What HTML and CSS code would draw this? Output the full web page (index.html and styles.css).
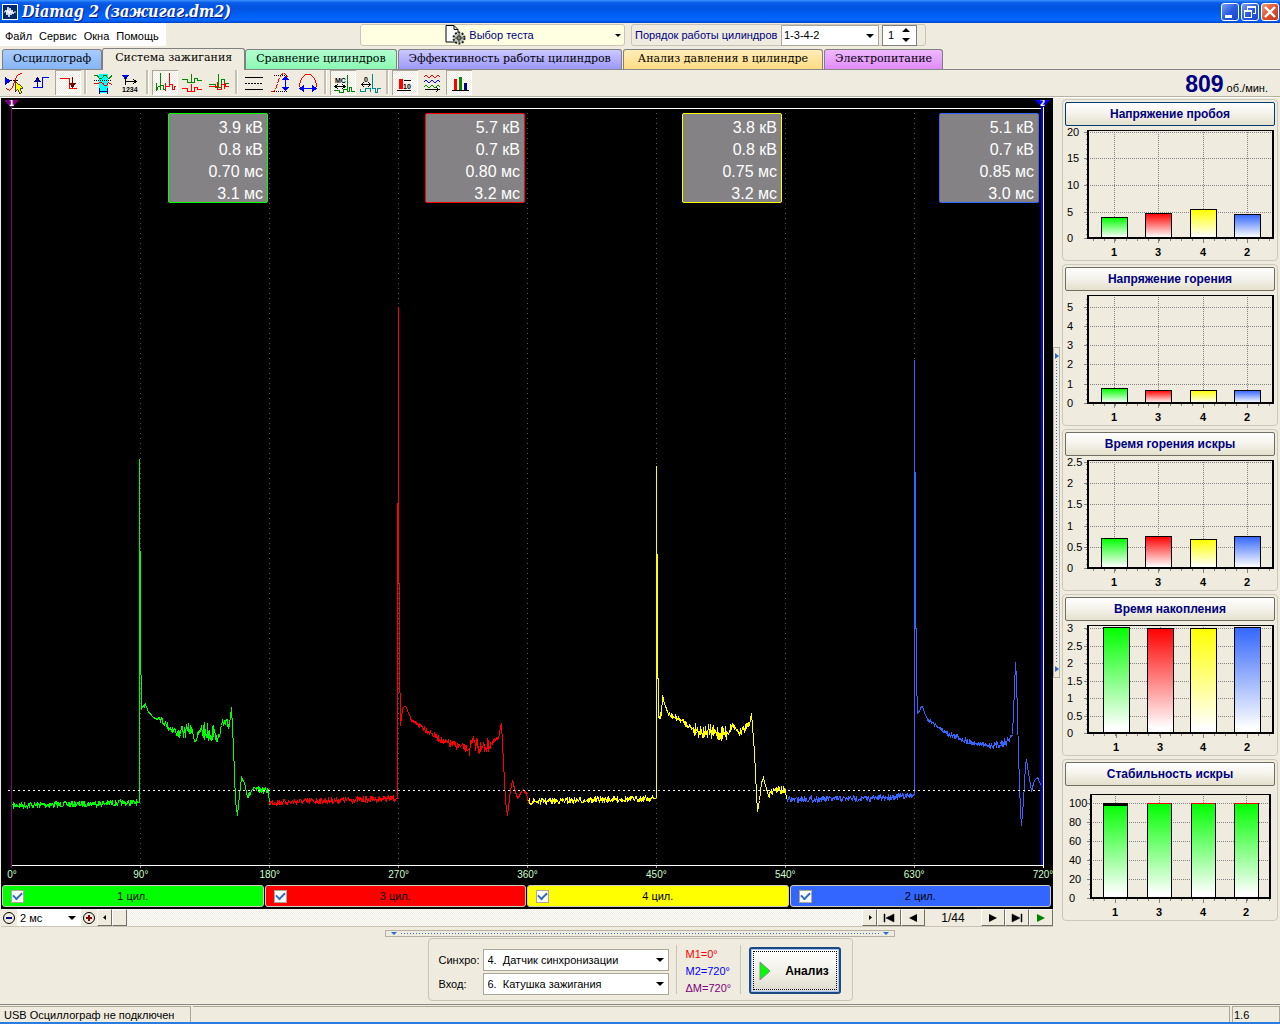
FILE: index.html
```html
<!DOCTYPE html>
<html lang="ru">
<head>
<meta charset="utf-8">
<title>Diamag 2 (зажигаг.dm2)</title>
<link rel="stylesheet" href="styles.css">
</head>
<body>
<header class="titlebar">
  <svg class="app-icon" width="16" height="16" viewBox="0 0 16 16"><rect width="16" height="16" fill="#fff"/><rect x="1" y="1" width="14" height="14" fill="#002a6c"/><path d="M2 8h1l1-2 1 5 1-8 1 10 1-9 1 7 1-5 1 4 1-2h2" fill="none" stroke="#fff"/></svg>
  <h1 class="title">Diamag 2 (зажигаг.dm2)</h1>
  <div class="win-buttons">
    <button class="win-btn" aria-label="Свернуть"><svg width="16" height="16" viewBox="0 0 16 16"><path d="M3 11h7v3H3z" fill="#fff"/></svg></button>
    <button class="win-btn" aria-label="Восстановить"><svg width="16" height="16" viewBox="0 0 16 16" fill="none" stroke="#fff" shape-rendering="crispEdges"><path d="M5.500 6V2.500h8v7H11M5 3.500h9M2.500 6.500h7v7h-7zM2 7.500h8"/></svg></button>
    <button class="win-btn close" aria-label="Закрыть"><svg width="16" height="16" viewBox="0 0 16 16"><path d="M3 3l10 10M13 3L3 13" stroke="#fff" stroke-width="2.400"/></svg></button>
  </div>
</header>

<div class="menurow">
  <nav class="menu">
    <a href="#file">Файл</a><a href="#service">Сервис</a><a href="#windows">Окна</a><a href="#help">Помощь</a>
  </nav>
  <button class="test-picker">
    <span class="test-name">
      <svg width="21" height="20" viewBox="0 0 21 20"><path d="M1 .5h8l4 4V17H1z" fill="#fff" stroke="#000"/><path d="M9 .5v4h4" fill="none" stroke="#000"/><circle cx="14" cy="13" r="5.500" fill="#c8d0c4" stroke="#222" stroke-width="2" stroke-dasharray="2 1.500"/><circle cx="14" cy="13" r="4" fill="#b4bcb0"/><circle cx="14" cy="13" r="2" fill="#ffffe1" stroke="#222"/><path d="M14 9v8M10 13h8" stroke="#222" stroke-width=".7"/></svg>
      Выбор теста
    </span>
    <span class="caret small"></span>
  </button>
  <div class="order">
    <label for="order">Порядок работы цилиндров</label>
    <span class="drop order-drop"><select id="order"><option>1-3-4-2</option></select></span>
    <span class="spin"><input type="number" value="1" aria-label="Номер цилиндра"><svg width="8" height="14" viewBox="0 0 8 14"><path d="M0 4l4-4 4 4zM0 10h8l-4 4z"/></svg></span>
  </div>
</div>

<nav class="tabs">
  <a href="#scope" class="tab blue">Осциллограф</a>
  <a href="#ignition" class="tab active">Система зажигания</a>
  <a href="#compare" class="tab green">Сравнение цилиндров</a>
  <a href="#efficiency" class="tab violet">Эффективность работы цилиндров</a>
  <a href="#pressure" class="tab amber">Анализ давления в цилиндре</a>
  <a href="#power" class="tab pink">Электропитание</a>
</nav>

<div class="toolbar">
  <button class="tool" aria-label="Маркер"><svg viewBox="0 0 26 26"><path d="M4 7l6 4-6 4z" fill="#00f"/><path d="M9 10.500h9" stroke="#000" stroke-dasharray="2 1"/><path d="M5 18q4 5 7-2l3-8q2-5 6-4" fill="none" stroke="#f00"/><path d="M14 11l8 7-3 .5 2 4-2 1-2-4-3 2z" fill="#ff0" stroke="#000" stroke-width=".7"/></svg></button>
  <button class="tool" aria-label="Фронт"><svg viewBox="0 0 26 26" fill="none"><path d="M5 17.500h9.500v-10H21" stroke="#00f"/><path d="M9.500 17V9" stroke="#008" stroke-width="1"/><path d="M6 12l3.500-5 3.500 5z" fill="#008"/></svg></button>
  <button class="tool on" aria-label="Спад"><svg viewBox="0 0 26 26" fill="none"><path d="M5 8.500h9.500v10H22" stroke="#f00"/><path d="M17.500 7v9" stroke="#700"/><path d="M14 13h7l-3.500 5z" fill="#700"/></svg></button>
  <span class="sep"></span>
  <button class="tool" aria-label="Диапазон"><svg viewBox="0 0 26 26" fill="none"><path d="M9 4h9v19H9z" fill="#0ff"/><path d="M4 5q4 0 5 3 2 2 4-1 2-4 5 1 2 1 4-3" stroke="#080"/><path d="M4 10.500h18" stroke="#000" stroke-dasharray="1 1"/><path d="M4 13q2 2 5 0 4-1 5 2 3 2 4-2 1-1 4 2" stroke="#f00"/><path d="M9.500 18v6M17.500 18v6M10 21h7" stroke="#008" stroke-width="1"/></svg></button>
  <button class="tool" aria-label="Шкала"><svg viewBox="0 0 26 26" fill="none"><path d="M5 5h7l-3.500 5z" fill="#00f"/><path d="M8.500 7v8M9 11.500h10M16 9l3 2.500-3 2.500" stroke="#000"/><text x="5" y="22" class="icon-text">1234</text></svg></button>
  <span class="sep"></span>
  <button class="tool on" aria-label="Парад"><svg viewBox="0 0 26 26" fill="none"><path d="M4.500 13v8l2-5h2M8.500 3v17M8.500 15.500h3v4h2v-3" stroke="#080"/><path d="M13.500 13v8M13.500 16.500h4M17.500 3v14M17.500 14.500h3v5h2v-3h1" stroke="#f00"/></svg></button>
  <button class="tool" aria-label="Растр"><svg viewBox="0 0 26 26" fill="none"><path d="M3 9.500h5v3h4V4v8h3v-4h3v2h5" stroke="#080"/><path d="M3 18.500h5v3h4v-8 8h3v-4h3v2h5" stroke="#f00"/></svg></button>
  <button class="tool" aria-label="Наложение"><svg viewBox="0 0 26 26" fill="none"><path d="M3 14.500h6v3h3V4v13h3v-8h3v4h5" stroke="#080"/><path d="M3 16.500h8v-5 8h4v-5h4v2h4M18.500 12v7" stroke="#f00"/></svg></button>
  <span class="sep"></span>
  <button class="tool" aria-label="Линии"><svg viewBox="0 0 26 26"><path d="M4 7.500h18M4 19.500h18" stroke="#000"/><path d="M4 13.500h18" stroke="#000" stroke-dasharray="2 1"/></svg></button>
  <button class="tool" aria-label="Амплитуда"><svg viewBox="0 0 26 26" fill="none"><path d="M3 21q4 2 6-6l2-6q3-8 7-4l2 3" stroke="#f00" stroke-dasharray="5 1"/><path d="M6 5.500h14M6 21.500h14" stroke="#000" stroke-dasharray="1 1"/><path d="M17.500 9v10" stroke="#00f"/><path d="M14 10l3.500-4 3.500 4zM14 17h7l-3.500 4z" fill="#00f"/></svg></button>
  <button class="tool" aria-label="Период"><svg viewBox="0 0 26 26" fill="none"><path d="M4.500 17q0-4 2-8 3-5 6.500-5t6.500 5q2 4 2 8" stroke="#f00"/><path d="M4 18.500h18" stroke="#00f"/><path d="M9 15v7l-5-3.500zM17 15v7l5-3.500z" fill="#00f"/></svg></button>
  <span class="sep"></span>
  <button class="tool on" aria-label="Показывать мс"><svg viewBox="0 0 26 26" fill="none"><text x="5" y="13" class="icon-text">МС</text><path d="M6 16.500h8M8 14l-3 2.500L8 19M12 14l3 2.500-3 2.500" stroke="#000"/><path d="M4 20.500h5v2h4v-3h4v-14M17.500 5v16h2v-4h2v4h3" stroke="#080"/></svg></button>
  <button class="tool" aria-label="Показывать градусы"><svg viewBox="0 0 26 26" fill="none"><text x="7" y="12" class="icon-text">0</text><path d="M5 14.500h8M7 12l-2 2.500L7 17M11 12l2 2.500-2 2.500" stroke="#000"/><path d="M3 18.500v3h5v-3h5v3M15.500 4v14h3v4h2v-4h3" stroke="#088"/></svg></button>
  <span class="sep"></span>
  <button class="tool on" aria-label="Числа"><svg viewBox="0 0 26 26"><path d="M7 9h4v10H7z" fill="#f00"/><path d="M5 20.500h14M12 10.500h7" stroke="#000"/><text x="11" y="19" class="icon-text">10</text></svg></button>
  <button class="tool" aria-label="Осреднение"><svg viewBox="0 0 26 26" fill="none"><path d="M5 7l2-2 3 3 3-3 3 3 3-3 2 2" stroke="#f00"/><path d="M5 12l2-2 3 3 3-3 3 3 3-3 2 2" stroke="#00f"/><path d="M5 17l2-2 3 3 3-3 3 3 3-3 2 2" stroke="#080"/><path d="M6 19.500h13M17 17.500l3 2-3 2" stroke="#000"/></svg></button>
  <button class="tool on" aria-label="Гистограммы"><svg viewBox="0 0 26 26"><path d="M8 9h3v11H8z" fill="#f00"/><path d="M13 7h3v13h-3z" fill="#080"/><path d="M18 13h3v7h-3z" fill="#008"/><path d="M6 20.500h17" stroke="#000"/></svg></button>
  <p class="rpm"><strong>809</strong> об./мин.</p>
</div>

<main class="work">
  <section class="scope-col">
    <div class="scope">
      <div class="plot">
        <svg id="plot" viewBox="0 0 1052 770" preserveAspectRatio="none" shape-rendering="crispEdges" fill="none"></svg>
        <span class="flag m1">1</span>
        <span class="flag m2">2</span>
        <div class="readouts">
          <div class="slot"><div class="readout c1">3.9 кВ<br>0.8 кВ<br>0.70 мс<br>3.1 мс</div></div>
          <div class="slot"><div class="readout c3">5.7 кВ<br>0.7 кВ<br>0.80 мс<br>3.2 мс</div></div>
          <div class="slot"><div class="readout c4">3.8 кВ<br>0.8 кВ<br>0.75 мс<br>3.2 мс</div></div>
          <div class="slot"><div class="readout c2">5.1 кВ<br>0.7 кВ<br>0.85 мс<br>3.0 мс</div></div>
        </div>
      </div>
      <div class="degrees"><span>0°</span><span>90°</span><span>180°</span><span>270°</span><span>360°</span><span>450°</span><span>540°</span><span>630°</span><span>720°</span></div>
      <div class="cylinders">
        <label class="cyl c1"><input type="checkbox" checked><span>1 цил.</span></label>
        <label class="cyl c3"><input type="checkbox" checked><span>3 цил.</span></label>
        <label class="cyl c4"><input type="checkbox" checked><span>4 цил.</span></label>
        <label class="cyl c2"><input type="checkbox" checked><span>2 цил.</span></label>
      </div>
    </div>
    <div class="scroller">
      <button class="flat" aria-label="Уменьшить"><svg width="14" height="14" viewBox="0 0 14 14" fill="none"><circle cx="7" cy="7" r="5.500" stroke="#000"/><path d="M4 7h6" stroke="#008" stroke-width="2"/></svg></button>
      <span class="drop scale-drop"><select aria-label="Развёртка"><option>2 мс</option></select></span>
      <button class="flat" aria-label="Увеличить"><svg width="14" height="14" viewBox="0 0 14 14" fill="none"><circle cx="7" cy="7" r="5.500" stroke="#000"/><path d="M4 7h6M7 4v6" stroke="#800" stroke-width="2"/></svg></button>
      <button class="raised arrow" aria-label="Влево"><svg width="6" height="8" viewBox="0 0 6 8"><path d="M4 1v5L1 3.500z"/></svg></button>
      <div class="track"><span class="raised thumb"></span></div>
      <button class="raised arrow" aria-label="Вправо"><svg width="6" height="8" viewBox="0 0 6 8"><path d="M2 1v5l3-2.500z"/></svg></button>
      <button class="raised nav" aria-label="Первый"><svg width="12" height="10" viewBox="0 0 12 10"><path d="M1 1h1v8H1zM11 1v8L3 5z" stroke="#000" stroke-width=".5"/></svg></button>
      <button class="raised nav" aria-label="Предыдущий"><svg width="10" height="10" viewBox="0 0 10 10"><path d="M9 1v8L1 5z"/></svg></button>
      <output class="frame-no">1/44</output>
      <button class="raised nav" aria-label="Следующий"><svg width="10" height="10" viewBox="0 0 10 10"><path d="M1 1v8l8-4z"/></svg></button>
      <button class="raised nav" aria-label="Последний"><svg width="12" height="10" viewBox="0 0 12 10"><path d="M10 1h1v8h-1zM1 1v8l8-4z" stroke="#000" stroke-width=".5"/></svg></button>
      <button class="raised nav" aria-label="Пуск"><svg width="10" height="10" viewBox="0 0 10 10"><path d="M1 1v8l8-4z" fill="#008000"/></svg></button>
    </div>
  </section>
  <div class="vsplit"><div class="vgrip"><i></i><b></b><i></i></div></div>
  <aside class="charts" id="charts"></aside>
</main>

<div class="hgrip"><i></i><b></b><i></i></div>

<form class="controls">
  <div class="sources">
    <label for="sync">Синхро:</label>
    <span class="drop"><select id="sync"><option>4.&nbsp; Датчик синхронизации</option></select></span>
    <label for="input">Вход:</label>
    <span class="drop"><select id="input"><option>6.&nbsp; Катушка зажигания</option></select></span>
  </div>
  <div class="markers"><span class="mk1">M1=0°</span><span class="mk2">M2=720°</span><span class="mkd">ΔM=720°</span></div>
  <button type="button" class="analyse"><svg width="12" height="20" viewBox="0 0 12 20"><path d="M1 1v18l10-9z" fill="#0f0" stroke="#888"/></svg>Анализ</button>
</form>

<footer class="status"><span class="s-usb">USB Осциллограф не подключен</span><span class="s-mid"></span><span class="s-ver">1.6</span></footer>
<script src="app.js"></script>
</body>
</html>
```
FILE: styles.css
```css
* { box-sizing: border-box; }
body {
  margin: 0;
  min-height: 100vh;
  display: flex;
  flex-direction: column;
  background: #efebde;
  color: #000;
  font: 11px/14px "Liberation Sans", sans-serif;
  border-bottom: 2px solid #2a7de0;
}
button, select, input { font: inherit; color: inherit; margin: 0; padding: 0; border-radius: 0; }
a { color: inherit; text-decoration: none; }
h1, p { margin: 0; }
svg { flex: none; }

.titlebar {
  height: 23px;
  display: flex;
  align-items: center;
  gap: 4px;
  padding: 0 1px 0 2px;
  background: linear-gradient(#3a93ff, #0a5be8 12%, #0053e0 35%, #0062fa 70%, #0066ff 88%, #0041c0);
}
.title { flex: 1; color: #fff; font: italic bold 16px/20px "DejaVu Serif Condensed", "DejaVu Serif", serif; text-shadow: 1px 1px #0a1883; }
.win-buttons { display: flex; gap: 2px; }
.win-btn {
  width: 18px; height: 18px;
  display: flex; align-items: center; justify-content: center;
  border: 1px solid #fff; border-radius: 3px;
  background: linear-gradient(135deg, #7ba0f0, #2a5be0 50%, #1c49cc);
}
.win-btn.close { background: linear-gradient(135deg, #f0a080, #e05030 50%, #c03818); }

.menurow { height: 25px; display: flex; align-items: flex-start; }
.menu { width: 166px; height: 23px; padding: 2px 5px 0; display: flex; align-items: center; gap: 7px; background: #fff; }
.test-picker {
  width: 265px; height: 22px; margin: 1px 6px 0 194px; padding: 0 3px;
  display: flex; align-items: center;
  background: #ffffe1; border: 1px solid #c8c4b8; border-radius: 3px;
  color: #000080; font-size: 11px;
}
.test-name { flex: 1; display: flex; align-items: center; justify-content: center; gap: 3px; }
.caret { border: 4px solid transparent; border-top-color: #000; border-bottom: 0; }
.caret.small { border-width: 3px 3px 0; }
.order {
  height: 22px; margin-top: 1px; padding: 0 8px 0 3px; display: flex; align-items: center; gap: 3px;
  border: 1px solid #c8c4b8; border-radius: 3px; color: #000080;
}
.order label { width: 143px; white-space: nowrap; }
.drop { position: relative; display: flex; color: #000; }
.drop select {
  width: 100%; height: 22px; padding: 0 4px; appearance: none;
  background: #fff; border: 1px solid #aca899;
}
.drop::after {
  content: ""; position: absolute; right: 5px; top: 9px; pointer-events: none;
  border: 4px solid transparent; border-top-color: #000; border-bottom: 0;
}
.order-drop { width: 98px; }
.order-drop select { padding: 0 2px; }
.order-drop select, .spin { height: 21px; font-size: 11px; }
.spin { width: 35px; display: flex; align-items: center; padding-right: 6px; background: #fff; border: 1px solid #808080; color: #000; }
.spin input { flex: 1; min-width: 0; padding-left: 5px; border: 0; background: none; appearance: textfield; }
.spin input::-webkit-inner-spin-button { display: none; }

.tabs { display: flex; align-items: flex-end; height: 22px; padding-left: 2px; border-bottom: 1px solid #888; }
.tab {
  height: 20px; margin-right: 1px; padding: 0 10px; white-space: nowrap;
  font: 11px/18px "DejaVu Serif", serif;
  border: 1px solid #808080; border-bottom: 0; border-radius: 3px 3px 0 0;
}
.tab.active { height: 22px; margin: 0 0 -1px -1px; padding: 0 12px; background: #efebde; }
.tab.blue { background: linear-gradient(#a8ccff, #86b4f4); }
.tab.green { background: linear-gradient(#b0ffd0, #8cf8b4); }
.tab.violet { background: linear-gradient(#ccc8ff, #9c98fc); }
.tab.amber { padding: 0 14px; background: linear-gradient(#ffecb8, #ffdc84); }
.tab.pink { background: linear-gradient(#f0b8ff, #e08cfc); }

.toolbar { height: 28px; display: flex; gap: 1px; padding: 0 12px 2px 1px; border-bottom: 1px solid #fff; box-shadow: inset 0 -1px #b4b0a4; }
.tool { width: 26px; height: 25px; border: 0; background: none; }
.tool svg { display: block; width: 26px; height: 26px; shape-rendering: crispEdges; }
.tool.on {
  background: repeating-conic-gradient(#fff 0 25%, #efebde 0 50%) 0 0 / 2px 2px;
  box-shadow: inset 1px 1px #aca899, inset -1px -1px #fff;
}
.sep { width: 7px; height: 24px; padding-left: 2px; }
.sep::before { content: ""; display: block; width: 2px; height: 100%; background: #c4c0b4; border-right: 1px solid #fff; }
.icon-text { font: bold 7px "Liberation Sans", sans-serif; fill: #000; }
.rpm { margin-left: auto; font-size: 11px; line-height: 28px; }
.rpm strong { font-size: 23px; color: #000080; }

.work { flex: 1; display: flex; padding: 0 2px 0 1px; }
.scope-col { flex: 1; min-width: 0; display: flex; flex-direction: column; }
.scope { flex: 1; display: flex; flex-direction: column; background: #000; }
.plot { flex: 1; position: relative; min-height: 240px; }
.plot svg { position: absolute; inset: 0; width: 100%; height: 100%; }
.plot svg * { vector-effect: non-scaling-stroke; }
.flag {
  position: absolute; top: 2px; width: 15px; height: 8px;
  color: #fff; font: bold 8px/7px "DejaVu Sans", sans-serif; text-align: center;
  clip-path: polygon(0 0, 100% 0, 50% 100%);
}
.m1 { left: 3px; background: #800080; }
.m2 { right: 3px; background: #00f; }
.readouts { position: relative; display: flex; padding: 15px 14px 0 10px; }
.slot { flex: 1; display: flex; justify-content: flex-end; }
.readout {
  width: 100px; padding: 3px 4px 0; height: 90px;
  background: #848284; border: 1px solid #fff; border-radius: 2px;
  color: #fff; font-size: 16px; line-height: 22px; text-align: right;
}
.readout.c1 { border-color: #0f0; }
.readout.c3 { border-color: #f00; }
.readout.c4 { border-color: #ff0; }
.readout.c2 { border-color: #36f; }
.degrees { height: 17px; padding: 0 10px 0 11px; display: flex; justify-content: space-between; color: #ceffce; font: 10px/14px "Liberation Sans", sans-serif; }
.degrees span { width: 0; display: flex; justify-content: center; }
.cylinders { display: grid; grid-template-columns: repeat(4, 1fr); gap: 1px; padding: 0 2px 2px 1px; }
.cyl {
  height: 22px; padding: 0 8px; display: flex; align-items: center;
  border: 1px solid #d0ccc0; border-radius: 3px; color: #000;
}
.cyl span { flex: 1; text-align: center; padding-right: 13px; }
.cyl.c1 { background: #0f0; }
.cyl.c3 { background: #f00; }
.cyl.c4 { background: #ff0; }
.cyl.c2 { background: #36f; }
.cyl input {
  appearance: none; width: 13px; height: 13px; background: #fff; border: 1px solid #aca899;
  display: flex; align-items: center; justify-content: center;
}
.cyl input:checked::before { content: ""; width: 7px; height: 4px; margin-top: -2px; border: solid #316ac5; border-width: 0 0 2px 2px; transform: rotate(-45deg); }

.scroller { height: 18px; display: flex; border-bottom: 1px solid #c8c4b8; }
.flat { width: 16px; display: flex; align-items: center; justify-content: center; border: 0; background: none; }
.scale-drop { width: 64px; }
.scale-drop select { height: 17px; padding: 0 3px; border: 0; }
.scale-drop::after { top: 7px; }
.raised { background: #efebde; border: 1px solid #fff; border-right-color: #716f64; border-bottom-color: #716f64; }
.arrow { width: 15px; display: flex; align-items: center; justify-content: center; }
.track { flex: 1; display: flex; background: repeating-conic-gradient(#fff 0 25%, #efebde 0 50%) 0 0 / 2px 2px; }
.thumb { width: 15px; }
.nav { width: 24px; display: flex; align-items: center; justify-content: center; }
.frame-no { width: 56px; text-align: center; font-size: 12px; line-height: 18px; }

.vsplit { width: 9px; display: flex; align-items: center; }
.vgrip, .hgrip { display: flex; align-items: center; justify-content: space-between; border: 1px solid #b4b0a4; }
.vgrip { flex-direction: column; width: 7px; height: 331px; padding: 5px 0; }
.vgrip b { flex: 1; width: 1px; margin: 2px 0; background: repeating-linear-gradient(#316ac5 0 1px, transparent 1px 3px); }
.vgrip i { border: 3px solid transparent; border-left: 4px solid #316ac5; border-right: 0; }
.hgrip { width: 510px; max-width: 100%; height: 7px; margin: 3px auto 1px; padding: 0 5px; }
.hgrip b { flex: 1; height: 1px; margin: 0 4px; background: repeating-linear-gradient(90deg, #316ac5 0 1px, transparent 1px 3px); }
.hgrip i { border: 3px solid transparent; border-top-color: #316ac5; border-bottom: 0; }

.charts { width: 216px; padding-top: 1px; display: flex; flex-direction: column; gap: 3px; }
.chart { height: 162px; padding: 2px; border: 1px solid #ccc8bc; border-radius: 4px; }
.chart button {
  display: block; width: 100%; height: 24px;
  border: 1px solid #716f64; border-radius: 2px;
  background: linear-gradient(#fff, #f4f2ea 50%, #e4e0cc);
  color: #000080; font-weight: bold; font-size: 12px;
}
.chart:first-child button { border-color: #003c74; }
.chart svg { display: block; shape-rendering: crispEdges; }
.chart text { font-size: 11px; }
.chart .cat { font-weight: bold; }

.controls {
  width: 425px; max-width: 100%; height: 63px; margin: 0 auto; padding: 8px 11px 6px 10px;
  display: flex; align-items: stretch;
  border: 1px solid #c8c4b8; border-radius: 4px;
}
.sources { display: grid; grid-template-columns: 44px 186px; row-gap: 2px; align-content: start; align-items: center; padding-top: 2px; }
.markers {
  width: 66px; margin: -2px 8px 0 7px; padding: 2px 9px; display: flex; flex-direction: column; gap: 3px;
  border: solid #c8c4b8; border-width: 0 1px;
}
.mk1 { color: #f00; }
.mk2 { color: #00f; }
.mkd { color: #800080; }
.analyse {
  width: 92px; height: 47px; padding-left: 8px; display: flex; align-items: center; gap: 14px;
  border: 2px solid #1a4a84; border-radius: 3px;
  background: linear-gradient(#fff, #f0eee4 60%, #dcd8cc);
  box-shadow: inset 0 0 0 1px #a8c4f0; outline: 1px dotted #000; outline-offset: -5px;
  font-weight: bold; font-size: 12px; white-space: nowrap;
}

.status { display: flex; gap: 2px; height: 18px; margin-top: 3px; border-top: 1px solid #888; padding-top: 1px; }
.status span { border: solid #aca899; border-width: 1px 1px 0 0; padding: 0 4px; line-height: 16px; white-space: nowrap; }
.s-usb { width: 191px; }
.s-mid { flex: 1; }
.status .s-ver { width: 48px; border-left-width: 1px; padding: 0 1px; }
```
FILE: app.js
```js
// Secondary voltage over 720 degrees; each list holds x, y, noise amplitude up to that point.
const traces = [
  ['#00ff00', [[11,707,0],[137,704,3],[138,704,2],[138,361,0],[139,540,0],[140,611,0],[144,606,2],[149,616,2],[152,619,2],[158,619,2],[165,627,3],[179,636,4],[186,631,7],[191,632,6],[193,643,2],[199,632,3],[213,634,10],[216,643,3],[220,627,3],[228,626,6],[230,609,0],[232,649,0],[234,702,0],[236,717,0],[238,697,0],[240,679,0],[243,684,1],[246,699,1],[251,691,2],[267,692,3],[268,707,0]]],
  ['#ff0000', [[268,704,0],[395,700,3],[396,700,0],[396,405,0],[397,405,0],[397,208,0],[397,405,0],[398,560,0],[399,627,0],[401,610,0],[403,608,0],[405,609,1],[410,623,1],[416,625,2],[430,635,3],[443,644,3],[459,648,4],[467,651,4],[473,644,8],[480,650,8],[490,645,7],[497,640,3],[500,625,1],[502,664,0],[504,702,0],[506,717,0],[509,692,0],[511,682,0],[513,690,1],[516,700,1],[521,692,1],[525,695,2],[527,705,0]]],
  ['#ffff00', [[527,703,0],[653,700,3],[655,699,0],[655,368,0],[656,540,0],[657,618,0],[660,616,4],[661,598,0],[664,608,2],[667,616,2],[680,622,3],[691,630,3],[705,634,7],[726,635,8],[731,626,5],[737,634,3],[748,627,4],[750,615,1],[753,654,0],[755,695,0],[756,713,0],[758,702,0],[760,684,0],[762,679,0],[765,690,1],[767,697,1],[773,691,3],[784,692,4],[785,701,0]]],
  ['#3366ff', [[785,701,0],[870,700,3],[912,697,3],[913,695,0],[913,262,0],[914,480,0],[915,579,0],[916,615,0],[919,610,1],[921,608,2],[926,621,1],[931,624,2],[944,634,2],[959,640,3],[974,645,3],[987,647,2],[999,646,3],[1007,642,4],[1011,636,3],[1013,590,0],[1014,564,0],[1015,580,0],[1017,655,0],[1019,714,0],[1020,727,0],[1022,702,0],[1024,667,0],[1025,661,0],[1027,674,0],[1030,693,1],[1033,682,1],[1036,679,1],[1038,684,1],[1041,688,0]]]
];

let seed = 7;
function rnd() {
  seed = (seed * 16807) % 2147483647;
  return seed / 2147483647 * 2 - 1;
}

// Two samples per column give the band of noise its thickness.
function tracePoints(knots) {
  const out = [knots[0].slice(0, 2)];
  for (let i = 1; i < knots.length; i++) {
    const [x0, y0] = knots[i - 1];
    const [x1, y1, noise] = knots[i];
    for (let x = x0 + 1; x < x1; x++) {
      const y = y0 + (y1 - y0) * (x - x0) / (x1 - x0);
      out.push([x, Math.round(y + rnd() * noise)]);
      if (noise > 1) out.push([x, Math.round(y + rnd() * noise)]);
    }
    out.push([x1, y1]);
  }
  return out.map(([x, y]) => (x + 0.5) + ',' + (y + 0.5)).join(' ');
}

let plot = '';
for (let i = 1; i < 8; i++) {
  const x = 10.5 + i * 129;
  plot += `<path d="M${x} 15V766" stroke="#555" stroke-dasharray="1 4"/><path d="M${x} 768v3" stroke="#999"/>`;
}
plot += '<path d="M11 10.500H1042M11 767.500H1042" stroke="#fff"/>';
for (const [color, knots] of traces) {
  plot += `<polyline points="${tracePoints(knots)}" stroke="${color}"/>`;
}
plot += '<path d="M7 692.500H1042" stroke="#fff" stroke-dasharray="2 3"/>';
plot += '<path d="M10.500 9V770" stroke="#800080"/><path d="M1041 9V767" stroke="#00f" stroke-width="2"/><path d="M1042.500 9V770" stroke="#fff"/>';
document.getElementById('plot').innerHTML = plot;

// Histograms: axis ticks as [label, y], bars as [centre, top].
const charts = [
  { name: 'Напряжение пробоя', ticks: [['20',6],['15',32],['10',59],['5',86],['0',112]], bars: [[51,91],[95,87],[140,83],[184,88]] },
  { name: 'Напряжение горения', ticks: [['5',16],['4',35],['3',54],['2',73],['1',93],['0',112]], bars: [[51,97],[95,99],[140,99],[184,99]] },
  { name: 'Время горения искры', ticks: [['2.5',6],['2',27],['1.5',48],['1',70],['0.5',91],['0',112]], bars: [[51,82],[95,80],[140,83],[184,80]] },
  { name: 'Время накопления', ticks: [['3',7],['2.5',25],['2',42],['1.5',60],['1',77],['0.5',95],['0',112]], bars: [[53,6],[97,7],[140,7],[184,6]] },
  { name: 'Стабильность искры', stable: true, ticks: [['100',17],['80',36],['60',55],['40',74],['20',93],['0',112]], bars: [[52,17],[96,17],[140,17],[183,17]] }
];
const colors = ['#00ff00', '#ff0000', '#ffff00', '#3366ff'];
const cylinders = ['1', '3', '4', '2'];

document.getElementById('charts').innerHTML = charts.map((c, n) => {
  const left = c.stable ? 28 : 25, right = c.stable ? 207 : 210, top = c.stable ? 8 : 4;
  const half = c.stable ? 12 : 13;
  let s = '<defs>' + colors.map((k, i) => `<linearGradient id="g${n}${i}" x2="0" y2="1"><stop stop-color="${c.stable ? colors[0] : k}"/><stop offset=".95" stop-color="#fff"/></linearGradient>`).join('') + '</defs>';
  for (const [label, y] of c.ticks) {
    s += `<path d="M${left - 4} ${y + 0.5}h4" stroke="#848284"/><path d="M${left} ${y + 0.5}H${right}" stroke="#848284" stroke-dasharray="1 1"/>`;
    s += `<text fill="#000" x="${c.stable ? 6 : 4}" y="${y + 4}">${label}</text>`;
  }
  for (let y = 108; y > top; y -= 5) s += `<path d="M${left - 2} ${y + 0.5}h2" stroke="#848284"/>`;
  for (let x = 30; x < right; x += 11) s += `<path d="M${x + 0.5} 113v2" stroke="#848284"/>`;
  s += c.bars.map(([x]) => `<path d="M${x + 0.5} ${top}V112" stroke="#848284" stroke-dasharray="1 1"/><path d="M${x + 0.5} 113v4" stroke="#848284"/>`).join('');
  s += c.bars.map(([x, y], i) => {
    let bar = `<rect x="${x - half + 0.5}" y="${y + 0.5}" width="${half * 2}" height="${112 - y}" fill="url(#g${n}${i})" stroke="#000"/>`;
    if (c.stable) bar += i ? `<path d="M${x - half} ${y + 0.5}h${half * 2}" stroke="#f00"/>` : `<path d="M${x - half} ${y + 1.5}h${half * 2}" stroke="#000" stroke-width="3"/>`;
    return bar + `<text fill="#000" class="cat" x="${x}" y="130" text-anchor="middle">${cylinders[i]}</text>`;
  }).join('');
  s += `<path d="M${left} ${top + 0.5}H${right}" stroke="#000"/><path d="M${left} ${top}V112M${right} ${top}V113M${left - 1} 112H${right + 1}" stroke="#000" stroke-width="2"/>`;
  return `<section class="chart"><button>${c.name}</button><svg width="210" height="132" viewBox="2 0 210 132" fill="none">${s}</svg></section>`;
}).join('');
```
